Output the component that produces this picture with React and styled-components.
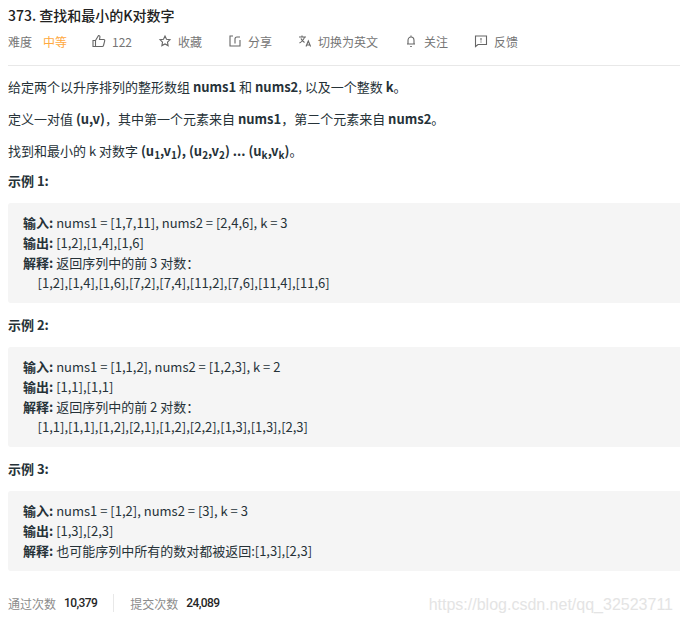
import React from "react";
import styled, { createGlobalStyle } from "styled-components";

const GlobalStyle = createGlobalStyle`
  html, body { margin: 0; padding: 0; background: #fff; }
  body { font-family: "Noto Sans CJK SC", "Noto Sans", sans-serif; color: #262626; }
`;

const Page = styled.div`
  width: 680px;
  height: 623px;
  overflow: hidden;
  position: relative;
  background: #fff;
`;

const Header = styled.div`
  margin-left: 8px;
  border-bottom: 1px solid #e8e8e8;
  height: 66px;
  box-sizing: border-box;
`;

const Title = styled.div`
  font-size: 14px;
  font-weight: 500;
  line-height: 20px;
  padding-top: 5px;
  color: #212121;
`;

const Meta = styled.div`
  display: flex;
  align-items: center;
  height: 20px;
  margin-top: 6px;
  font-size: 12px;
  color: #757575;
`;

const MetaItem = styled.span`
  display: flex;
  align-items: center;
  gap: 6px;
  margin-left: ${(p) => p.$gap || 0}px;
  color: ${(p) => p.$color || "#757575"};
`;

const Body = styled.div`
  padding: 11px 0 0 8px;
  font-size: 13px;
  color: #263238;
`;

const Para = styled.p`
  margin: 0 0 12px;
  line-height: 20px;
  white-space: nowrap;
`;

const Heading = styled.p`
  margin: -2px 0 12px;
  line-height: 20px;
  font-weight: 700;
  white-space: nowrap;
`;

const Sub = styled.sub`
  font-size: 10px;
  vertical-align: -3px;
  line-height: 0;
`;

const Example = styled.div`
  margin: 0 0 14px;
  padding: 10px 0 10px 15px;
  background: #f5f5f5;
  border-radius: 3px 0 0 3px;
  line-height: 20px;
  white-space: pre;
`;

const Footer = styled.div`
  display: flex;
  align-items: center;
  padding-left: 8px;
  font-size: 12px;
  color: #8c8c8c;
  height: 20px;
  margin-top: 22px;
`;

const Count = styled.b`
  font-family: "Roboto", sans-serif;
  color: #262626;
  margin-left: 8px;
  font-weight: 500;
  letter-spacing: -0.6px;
`;

const Divider = styled.span`
  width: 1px;
  height: 18px;
  background: #e8e8e8;
  margin: 0 16px;
`;

const Watermark = styled.span`
  position: absolute;
  right: 7px;
  bottom: 9px;
  font-family: "Liberation Sans", sans-serif;
  font-size: 16px;
  color: #e4e4e4;
`;

const Icon = ({ children }) => (
  <svg width="14" height="14" viewBox="0 0 14 14" fill="none" stroke="#666" strokeWidth="1.1">
    {children}
  </svg>
);

export default function App() {
  return (
    <Page>
      <GlobalStyle />
      <Header>
        <Title>373. 查找和最小的K对数字</Title>
        <Meta>
          <MetaItem>难度</MetaItem>
          <MetaItem $gap={11} $color="#ffa940">中等</MetaItem>
          <MetaItem $gap={25}>
            <Icon><path d="M1 6.500h2.500v6H1zM3.500 6.500L6.500 1.500c1.200 0 1.600.8 1.400 1.800L7.500 5.500h4.200c.8 0 1.200.6 1 1.400l-1.200 4.600c-.2.6-.6 1-1.200 1H3.500" /></Icon>
            122
          </MetaItem>
          <MetaItem $gap={26}>
            <Icon><path d="M7 2l1.500 3.200 3.500.5-2.500 2.400.6 3.500L7 9.900l-3.100 1.700.6-3.500L2 5.700l3.500-.5z" /></Icon>
            收藏
          </MetaItem>
          <MetaItem $gap={26}>
            <Icon><path d="M5 2H2v10h10V6M7 9.500V5c0-1.200.8-2 2-2h3" /></Icon>
            分享
          </MetaItem>
          <MetaItem $gap={26}>
            <Icon><path d="M1 3h7M4 1.500V3M6.500 3c-.5 2.500-2.300 4.500-5 6M3 4.500c.8 1.800 2 3 3.500 4M8 12.500l2.300-5.500 2.300 5.500M8.800 11h3" /></Icon>
            切换为英文
          </MetaItem>
          <MetaItem $gap={26}>
            <Icon><path d="M4 10V6.500C4 4.500 5.200 3 7 3s3 1.500 3 3.500V10M3 10h8M7 1.500V3M6.200 12.500h1.600" /></Icon>
            关注
          </MetaItem>
          <MetaItem $gap={26}>
            <Icon><path d="M1.500 2h11v8.500H4l-2.500 2zM7 4v2.500M7 7.500v1" /></Icon>
            反馈
          </MetaItem>
        </Meta>
      </Header>
      <Body>
        <Para>给定两个以升序排列的整形数组 <b>nums1</b> 和 <b>nums2</b>, 以及一个整数 <b>k</b>。</Para>
        <Para>定义一对值 <b>(u,v)</b>，其中第一个元素来自 <b>nums1</b>，第二个元素来自 <b>nums2</b>。</Para>
        <Para>找到和最小的 k 对数字 <b>(u<Sub>1</Sub>,v<Sub>1</Sub>), (u<Sub>2</Sub>,v<Sub>2</Sub>) ... (u<Sub>k</Sub>,v<Sub>k</Sub>)</b>。</Para>
        <Heading>示例 1:</Heading>
        <Example><b>输入:</b> nums1 = [1,7,11], nums2 = [2,4,6], k = 3{"\n"}<b>输出:</b> [1,2],[1,4],[1,6]{"\n"}<b>解释:</b> 返回序列中的前 3 对数：{"\n"}     [1,2],[1,4],[1,6],[7,2],[7,4],[11,2],[7,6],[11,4],[11,6]</Example>
        <Heading>示例 2:</Heading>
        <Example><b>输入:</b> nums1 = [1,1,2], nums2 = [1,2,3], k = 2{"\n"}<b>输出:</b> [1,1],[1,1]{"\n"}<b>解释:</b> 返回序列中的前 2 对数：{"\n"}     [1,1],[1,1],[1,2],[2,1],[1,2],[2,2],[1,3],[1,3],[2,3]</Example>
        <Heading>示例 3:</Heading>
        <Example><b>输入:</b> nums1 = [1,2], nums2 = [3], k = 3{"\n"}<b>输出:</b> [1,3],[2,3]{"\n"}<b>解释:</b> 也可能序列中所有的数对都被返回:[1,3],[2,3]</Example>
      </Body>
      <Footer>
        通过次数<Count>10,379</Count>
        <Divider />
        提交次数<Count>24,089</Count>
      </Footer>
      <Watermark>https://blog.csdn.net/qq_32523711</Watermark>
    </Page>
  );
}
